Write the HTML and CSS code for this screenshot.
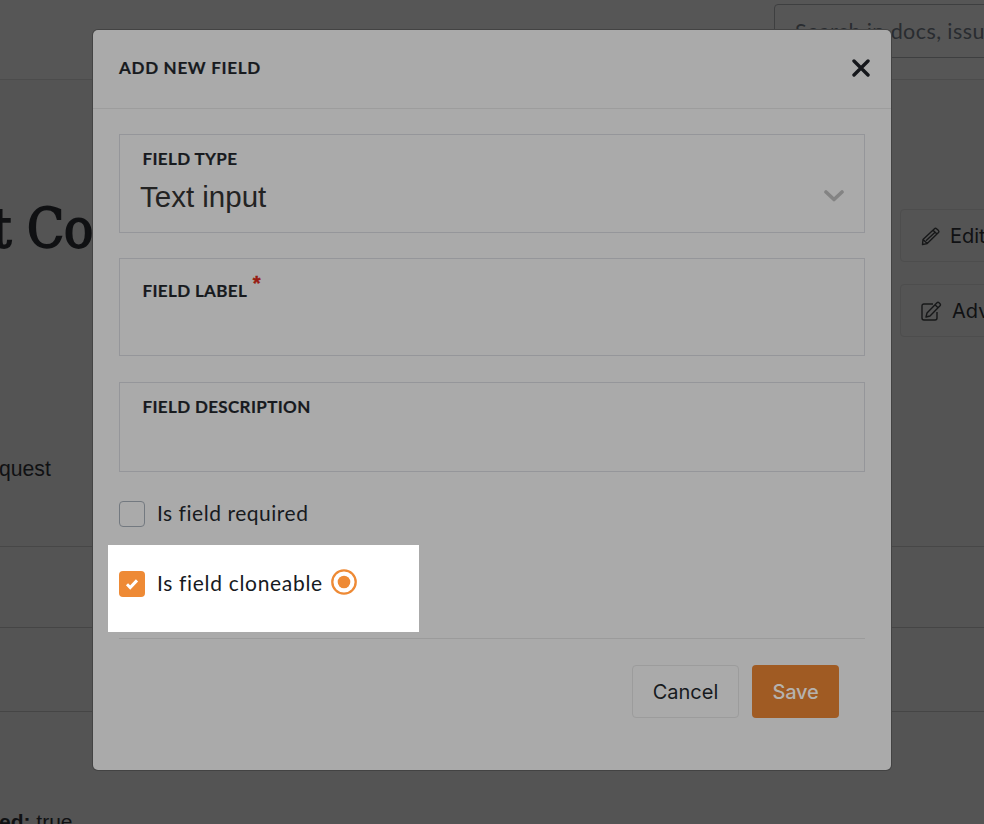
FILE: index.html
```html
<!DOCTYPE html>
<html lang="en">
<head>
<meta charset="utf-8">
<title>Add new field</title>
<link rel="stylesheet" href="styles.css">
</head>
<body>
<div class="page">
  <header class="topbar"><div class="search">Search in docs, issu</div></header>
  <section class="hero">
    <div class="intro"><h1>t Co</h1><p class="kind">quest</p></div>
    <div class="actions">
      <div class="action"><svg width="20" height="20" viewBox="0 0 20 20"><path d="M2 13.5 13.5 2.7q1-.9 2 0l2 1.9q.9 1 0 2L6.2 17.6 1.5 18.5zM12 4.2l4 3.8M2 13.5l4.2 4.1M5 14.8 13.8 6.4"/></svg><span class="edit">Edit</span></div>
      <div class="action"><svg width="21" height="20" viewBox="0 0 21 20"><path d="M12 3H3Q1 3 1 5v12q0 2 2 2h11q2 0 2-2v-6M6 12 16 1.8q1-.9 2 0l1 1q.9 1 0 2L9 15l-4 1zM14 3.8l3 3"/></svg><span class="advanced">Adv</span></div>
    </div>
  </section>
  <div class="row first"></div>
  <div class="row second"></div>
  <p class="meta"><b>ed:</b> true</p>
</div>

<div class="modal">
  <header class="modal-head">
    <h2>ADD NEW FIELD</h2>
    <svg class="close" width="18" height="18" viewBox="0 0 18 18"><path d="M2 2 16 16M16 2 2 16"/></svg>
  </header>
  <div class="modal-body">
    <div class="field type">
      <div class="label"><span>FIELD TYPE</span></div>
      <div class="select"><span class="value">Text input</span><svg width="20" height="12" viewBox="0 0 20 12"><path d="m2 2 8 7.5L18 2"/></svg></div>
    </div>
    <div class="field name"><div class="label"><span>FIELD LABEL</span><span class="star">*</span></div></div>
    <div class="field desc"><div class="label"><span>FIELD DESCRIPTION</span></div></div>
    <div class="check required"><span class="box"></span><span class="text">Is field required</span></div>
    <div class="spotlight">
      <div class="check"><span class="box checked"><svg width="14" height="12" viewBox="0 0 14 12"><path d="m2 6.3 3.2 3.2L12 2.4"/></svg></span><span class="text clone">Is field cloneable</span>
      <svg class="radio" width="26" height="26" viewBox="0 0 26 26"><circle class="ring" cx="13" cy="13" r="11.7"/><circle class="dot" cx="13" cy="13" r="6.3"/></svg></div>
    </div>
    <footer class="buttons"><button class="cancel">Cancel</button><button class="save">Save</button></footer>
  </div>
</div>
</body>
</html>
```
FILE: styles.css
```css
* { box-sizing: border-box; }
body { margin: 0; background: #545454; overflow: hidden; color: #171a1e; font-family: Lato, sans-serif; }
h1, h2, p { margin: 0; }
svg { flex: none; fill: none; display: block; }
.page { height: 824px; overflow: hidden; color: #101113; }
.topbar { height: 80px; border-bottom: 1px solid #4c4c4c; padding: 4px 0 0 774px; background: #565656; }
.search { width: 300px; height: 54px; border: 1px solid #3e3f40; border-radius: 4px; padding-left: 20px; font-size: 21.5px; letter-spacing: .42px; line-height: 53px; color: #292c30; white-space: nowrap; }
.hero { height: 467px; display: flex; justify-content: space-between; border-bottom: 1px solid #474747; }
h1 { margin: 112px 0 0 -8px; font: 54px/74px "DejaVu Serif"; font-stretch: condensed; -webkit-text-stroke: 1.8px #101113; white-space: nowrap; }
.kind { margin: 188px 0 0 -1px; font: 21.2px/30px "Liberation Sans", sans-serif; }
.actions { width: 84px; padding-top: 129px; display: flex; flex-direction: column; gap: 22px; }
.action { width: 150px; height: 53px; border: 1px solid #4d4d4d; border-radius: 4px; display: flex; align-items: center; gap: 9px; padding-left: 20px; font: 20px Inter, sans-serif; }
.advanced { margin-left: 1px; }
.action svg { stroke: #171819; stroke-width: 1.4; stroke-linejoin: round; }
.row { border-bottom: 1px solid #454545; }
.first { height: 81px; }
.second { height: 84px; }
.meta { margin: 95px 0 0 -1px; font: 21px/29px "Liberation Sans", sans-serif; }

.modal { position: absolute; left: 93px; top: 30px; width: 798px; height: 740px; border-radius: 5px; background: #aaa; box-shadow: 0 0 0 1px #434343; }
.modal-head { height: 79px; border-bottom: 1px solid #9d9d9d; padding: 0 21.5px 3px 26px; display: flex; align-items: center; justify-content: space-between; }
h2 { font-size: 17px; font-weight: 700; letter-spacing: .7px; -webkit-text-stroke: .2px #171a1e; }
.close { stroke: #15171b; stroke-width: 3.4; stroke-linecap: round; }
.modal-body { padding: 25px 26px 0; }
.field { border: 1px solid #95969a; padding: 0 22px; }
.type { height: 99px; padding-top: 13px; }
.name { height: 98px; margin-top: 25px; padding-top: 21px; }
.desc { height: 90px; margin-top: 26px; padding-top: 13px; }
.label { display: flex; height: 22px; padding-left: .5px; font-size: 17px; font-weight: 700; line-height: 22px; letter-spacing: .35px; -webkit-text-stroke: .2px #171a1e; }
.star { color: #981c12; margin: -8px 0 0 5.5px; font: 700 20px/22px "Liberation Sans"; -webkit-text-stroke: .4px #981c12; }
.select { display: flex; align-items: center; justify-content: space-between; height: 40px; margin-top: 7px; }
.value { margin-left: -2px; font: 29.5px/40px "Liberation Sans", sans-serif; color: #232323; }
.select svg { margin: -2px -2px 0 0; stroke: #838383; stroke-width: 3.6; stroke-linecap: round; stroke-linejoin: round; }
.check { display: flex; height: 26px; align-items: center; }
.required { margin-top: 29px; }
.box { width: 26px; height: 26px; border: 1px solid #737980; border-radius: 4px; margin-right: 12px; }
.checked { border: 0; background: #ee8a35; display: grid; place-items: center; }
.checked path { stroke: #fff; stroke-width: 3; }
.text { width: 151px; margin-top: -2px; font-size: 21px; letter-spacing: .53px; line-height: 26px; white-space: nowrap; }
.clone { width: 166px; letter-spacing: .68px; }
.radio { margin: -5px 0 0 8px; }
.ring { stroke: #ee8a35; stroke-width: 2.3; }
.dot { fill: #ee8a35; }
.spotlight { width: 311px; height: 87px; margin: 18px 0 0 -11px; padding: 26px 0 0 11px; background: #fff; }
.buttons { margin-top: 6px; border-top: 1px solid #9b9b9b; padding: 26px 26px 0; display: flex; justify-content: flex-end; gap: 13px; }
button { height: 53px; border: 1px solid #9c9c9c; border-radius: 4px; background: #aaa; padding: 0; color: #171a1e; font: 20px Inter, sans-serif; }
.cancel { width: 107px; }
.save { width: 87px; background: #a05b23; border: 0; color: #b5b2ae; font-weight: 500; letter-spacing: -.2px; }
```
